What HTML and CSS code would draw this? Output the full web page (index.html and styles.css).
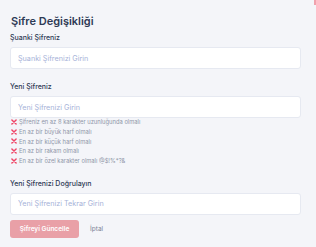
FILE: index.html
```html
<!DOCTYPE html>
<html lang="tr">
<head>
    <meta charset="UTF-8">
    <meta name="viewport" content="width=device-width, initial-scale=1.0">
    <title>Şifre Değişikliği</title>
    <link rel="stylesheet" href="styles.css">
</head>
<body>
<div class="container">
    <h2>Şifre Değişikliği</h2>

    <div class="field">
        <label>Şuanki Şifreniz</label>
        <input type="password" placeholder="Şuanki Şifrenizi Girin">
    </div>

    <div class="field">
        <label>Yeni Şifreniz</label>
        <input type="password" placeholder="Yeni Şifrenizi Girin">
        <ul class="rules">
            <li><svg class="cross" viewBox="0 0 10 10"><path d="M1.5 1.5L8.5 8.5M8.5 1.5L1.5 8.5"/></svg>Şifreniz en az 8 karakter uzunluğunda olmalı</li>
            <li><svg class="cross" viewBox="0 0 10 10"><path d="M1.5 1.5L8.5 8.5M8.5 1.5L1.5 8.5"/></svg>En az bir büyük harf olmalı</li>
            <li><svg class="cross" viewBox="0 0 10 10"><path d="M1.5 1.5L8.5 8.5M8.5 1.5L1.5 8.5"/></svg>En az bir küçük harf olmalı</li>
            <li><svg class="cross" viewBox="0 0 10 10"><path d="M1.5 1.5L8.5 8.5M8.5 1.5L1.5 8.5"/></svg>En az bir rakam olmalı</li>
            <li><svg class="cross" viewBox="0 0 10 10"><path d="M1.5 1.5L8.5 8.5M8.5 1.5L1.5 8.5"/></svg>En az bir özel karakter olmalı @$!%*?&amp;</li>
        </ul>
    </div>

    <div class="field">
        <label>Yeni Şifrenizi Doğrulayın</label>
        <input type="password" placeholder="Yeni Şifrenizi Tekrar Girin">
    </div>

    <div class="buttons">
        <button class="save" disabled>Şifreyi Güncelle</button>
        <button class="cancel">İptal</button>
    </div>
</div>
<div class="corner"></div>
</body>
</html>
```

FILE: styles.css
```css
body {
    font-family: 'Inter', 'Noto Sans', sans-serif;
    background-color: #f4f5f9;
    margin: 0;
    padding: 0;
}
.container {
    padding: 14px 15px 0 10px;
}
h2 {
    margin: 0 0 5px 1px;
    font-size: 11px;
    font-weight: 600;
    color: #2e3a55;
    line-height: 14px;
}
.field {
    display: flex;
    flex-direction: column;
    margin-bottom: 13px;
}
.field label {
    font-size: 7px;
    font-weight: 500;
    color: #2e3a55;
    line-height: 9px;
    margin-bottom: 5px;
}
.field input {
    box-sizing: border-box;
    height: 22px;
    border: 1px solid #e6e9f1;
    border-radius: 3px;
    background-color: #ffffff;
    padding: 0 7px;
    font-family: inherit;
    font-size: 7.2px;
    outline: none;
}
.field input::placeholder {
    color: #a6b2d8;
}
.rules {
    list-style: none;
    margin: -1px 0 0 0;
    padding: 0;
}
.rules li {
    display: flex;
    align-items: center;
    font-size: 5.8px;
    color: #8f95a8;
    line-height: 9.8px;
    margin-left: 1px;
}
.cross {
    width: 6px;
    height: 6px;
    margin-right: 2px;
    fill: none;
    stroke: #ef4566;
    stroke-width: 2.4;
    stroke-linecap: round;
}
.buttons {
    display: flex;
    align-items: center;
    gap: 11px;
    margin-top: -8px;
}
.buttons button {
    font-family: inherit;
    font-size: 6.5px;
    border: none;
    cursor: pointer;
}
.save {
    width: 69px;
    height: 18px;
    border-radius: 3px;
    background-color: #e9a0a7;
    color: #ffffff;
    font-weight: 600;
}
.cancel {
    background: none;
    padding: 0;
    color: #7d8398;
}
.corner {
    position: absolute;
    top: 0;
    right: 0;
    width: 2px;
    height: 5px;
    background-color: #f0a2ad;
}
```
